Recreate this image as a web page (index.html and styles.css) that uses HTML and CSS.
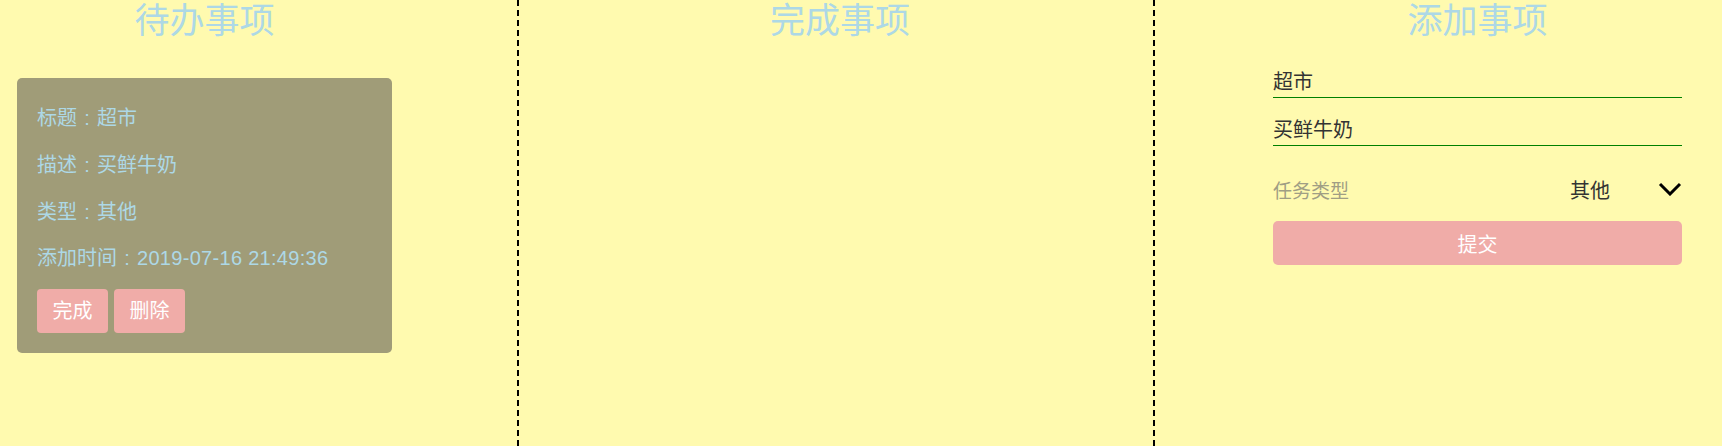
FILE: index.html
```html
<!DOCTYPE html>
<html lang="zh-CN">
<head>
<meta charset="utf-8">
<title>待办事项</title>
<link rel="stylesheet" href="styles.css">
</head>
<body>
<div class="board">
  <section class="col col-todo">
    <h2 class="col-title">待办事项</h2>
    <div class="card">
      <div class="info">
        <p>标题<span class="sep">:</span>超市</p>
        <p>描述<span class="sep">:</span>买鲜牛奶</p>
        <p>类型<span class="sep">:</span>其他</p>
        <p>添加时间<span class="sep">:</span><span class="time">2019-07-16 21:49:36</span></p>
      </div>
      <div class="actions">
        <button class="btn">完成</button>
        <button class="btn">删除</button>
      </div>
    </div>
  </section>
  <section class="col col-done">
    <h2 class="col-title">完成事项</h2>
  </section>
  <section class="col col-add">
    <h2 class="col-title">添加事项</h2>
    <form class="form">
      <input class="field field-first" type="text" value="超市">
      <input class="field" type="text" value="买鲜牛奶">
      <div class="type-row">
        <span class="type-label">任务类型</span>
        <span class="type-value">其他</span>
        <svg class="chevron" width="24" height="14" viewBox="0 0 24 14" aria-hidden="true">
          <path d="M2 2 L12 12 L22 2" fill="none" stroke="#000" stroke-width="3"/>
        </svg>
      </div>
      <button type="button" class="submit">提交</button>
    </form>
  </section>
</div>
</body>
</html>
```
FILE: styles.css
```css
html, body {
  margin: 0;
  padding: 0;
}
body {
  background: #fffaaf;
  font-family: "Liberation Sans", "Noto Sans CJK SC", sans-serif;
  height: 446px;
  overflow: hidden;
}
.board {
  display: flex;
  height: 446px;
}
.col {
  box-sizing: border-box;
  height: 100%;
}
.col-todo {
  width: 519px;
  padding-left: 17px;
  border-right: 2px dashed #000;
}
.col-todo > * {
  width: 375px;
}
.col-done {
  width: 636px;
  padding-left: 8px;
  border-right: 2px dashed #000;
}
.col-add {
  flex: 1;
  padding-left: 118px;
}
.col-add > * {
  width: 409px;
}
.col-title {
  margin: 0;
  height: 42px;
  line-height: 42px;
  font-size: 35px;
  font-weight: normal;
  color: #add8e6;
  text-align: center;
}
.card {
  box-sizing: border-box;
  margin-top: 36px;
  background: #a09c78;
  border-radius: 5px;
  padding: 27px 20px 20px;
  color: #add8e6;
  font-size: 20px;
}
.info {
  display: flex;
  flex-direction: column;
  gap: 19.8px;
  margin-bottom: 16.6px;
}
.info p {
  margin: 0;
  height: 27px;
  line-height: 27px;
}
.sep {
  display: inline-block;
  width: 1em;
  text-align: center;
}
.time {
  letter-spacing: 0.3px;
}
.actions {
  display: flex;
  gap: 6px;
}
.btn {
  height: 44px;
  padding: 0 15.5px;
  border: none;
  border-radius: 4px;
  background: #f0aca8;
  color: #fff;
  font-family: inherit;
  font-size: 20px;
  line-height: 44px;
}
.form {
  margin: 0;
  padding-top: 26px;
  display: flex;
  flex-direction: column;
}
.field {
  box-sizing: content-box;
  width: 409px;
  height: 24px;
  padding: 0 0 5px 0;
  margin: 18px 0 0;
  border: none;
  border-bottom: 1px solid #008000;
  background: transparent;
  color: #333;
  font-family: inherit;
  font-size: 20px;
  outline: none;
}
.field-first {
  margin-top: 0;
}
.type-row {
  display: flex;
  align-items: center;
  height: 42px;
  margin-top: 22px;
  font-size: 19px;
}
.type-label {
  flex: 1;
  color: #a09e84;
}
.type-value {
  color: #333;
  font-size: 20px;
}
.chevron {
  display: block;
  margin-left: 48px;
  margin-right: 0;
}
.submit {
  height: 44px;
  margin-top: 11px;
  border: none;
  border-radius: 5px;
  background: #f0aca8;
  color: #fff;
  font-family: inherit;
  font-size: 20px;
}
```
